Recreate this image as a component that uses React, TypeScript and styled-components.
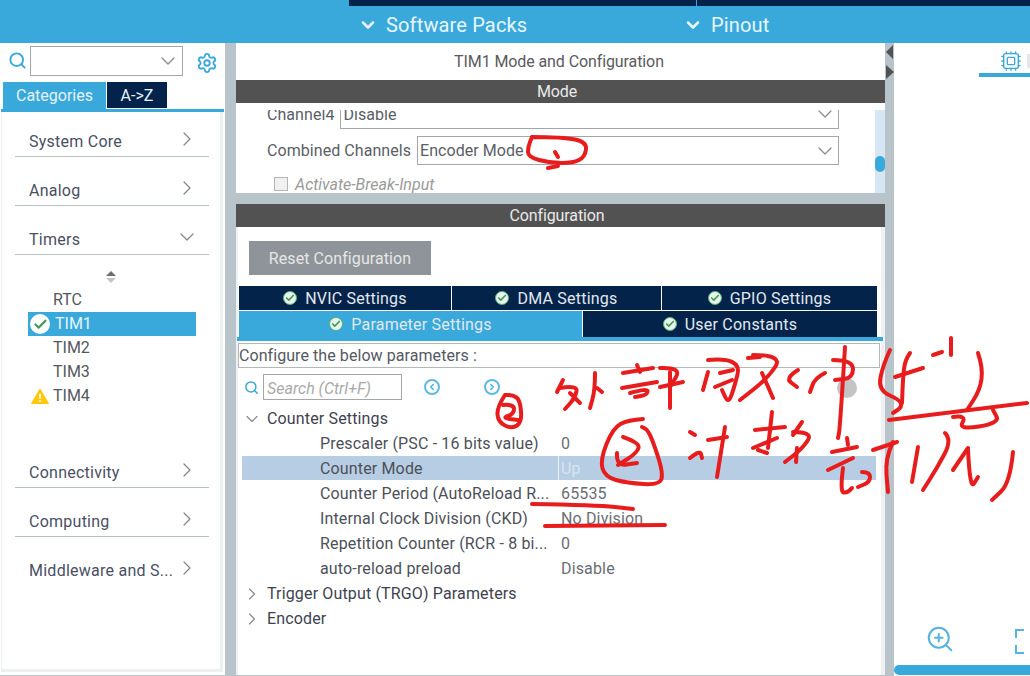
import styled, { createGlobalStyle } from "styled-components";
import { ChevronDown, ChevronRight, Check, Search, Settings, Cpu, ZoomIn, ChevronLeft } from "lucide-react";

const BLUE = "#39a9dc";
const NAVY = "#03234b";
const GUTTER = "#b8c4ca";
const BAR = "#525252";
const INK = "#4a4f63";

const GlobalStyle = createGlobalStyle`
  html, body {
    margin: 0;
    padding: 0;
    width: 1030px;
    height: 676px;
    overflow: hidden;
    background: #fff;
    font-family: Roboto, "Liberation Sans", sans-serif;
  }
`;

const Page = styled.div`
  position: relative;
  width: 1030px;
  height: 676px;
  overflow: hidden;
  display: flex;
  flex-direction: column;
`;

const Header = styled.header`
  height: 43px;
  background: ${BLUE};
  flex: none;
`;

const TopStrip = styled.div`
  height: 7px;
  display: flex;
  padding-left: 349px;
  gap: 1px;
`;

const TopTab = styled.div<{ $w: number }>`
  width: ${(p) => p.$w}px;
  height: 6px;
  background: ${NAVY};
`;

const HeaderMenus = styled.div`
  display: flex;
  height: 36px;
  align-items: center;
  padding-left: 358px;
  color: #e8f6fc;
  font-size: 20px;
`;

const HeaderMenu = styled.div<{ $w: number }>`
  width: ${(p) => p.$w}px;
  display: flex;
  align-items: center;
  gap: 8px;
  letter-spacing: 0.15px;
`;

const Body = styled.div`
  flex: 1;
  display: flex;
  min-height: 0;
  background: ${GUTTER};
`;

const Sidebar = styled.aside`
  width: 225px;
  background: #fff;
  flex: none;
  margin-bottom: 1px;
`;

const SearchRow = styled.div`
  height: 39px;
  display: flex;
  align-items: flex-start;
  padding: 3px 0 0 8px;
  box-sizing: border-box;
  color: ${BLUE};
`;

const Combo = styled.div`
  width: 153px;
  height: 30px;
  margin-left: 3px;
  box-sizing: border-box;
  border: 1px solid #a3a7ab;
  display: flex;
  align-items: center;
  justify-content: flex-end;
  padding-right: 2px;
  color: #8a8a8a;
`;

const GearBox = styled.div`
  margin: 6px 0 0 13px;
  color: ${BLUE};
  display: flex;
`;

const SideTabs = styled.div`
  display: flex;
  height: 27px;
  padding-left: 3px;
  gap: 1px;
`;

const SideTab = styled.div<{ $active?: boolean; $w: number }>`
  width: ${(p) => p.$w}px;
  height: ${(p) => (p.$active ? 27 : 26)}px;
  background: ${(p) => (p.$active ? BLUE : NAVY)};
  color: #e6f2f8;
  font-size: 16px;
  display: flex;
  align-items: center;
  justify-content: center;
`;

const SideRule = styled.div`
  height: 3px;
  width: 223px;
  margin-left: 1px;
  background: ${BLUE};
`;

const SideList = styled.div`
  padding: 0 13px 0 15px;
  width: 222px;
  box-sizing: border-box;
  border-left: 1px solid #edf0f1;
  border-right: 3px solid #edf0f1;
  border-bottom: 3px solid #edf0f1;
  height: 560px;
  margin-left: 1px;
`;

const Category = styled.div<{ $first?: boolean; $last?: boolean }>`
  height: ${(p) => (p.$first ? 45 : 49)}px;
  box-sizing: border-box;
  border-bottom: 1px solid ${(p) => (p.$last ? "transparent" : "#b9c1c8")};
  padding: 0 10px 0 14px;
  margin-left: -2px;
  width: 194px;
  display: flex;
  align-items: flex-end;
  justify-content: space-between;
  color: ${INK};
  font-size: 16px;
  letter-spacing: 0.25px;
  line-height: 28px;
`;

const CategoryIcon = styled.span`
  display: flex;
  color: #808589;
  margin-bottom: 5px;
`;

const ScrollMark = styled.div`
  width: 195px;
  height: 33px;
  display: flex;
  justify-content: center;
  padding-top: 15px;
  margin-left: -4px;
  box-sizing: border-box;
`;

const TimerList = styled.div`
  height: 151px;
`;

const TimerRow = styled.div<{ $selected?: boolean }>`
  position: relative;
  width: 168px;
  height: 24px;
  margin-left: 11px;
  padding-left: ${(p) => (p.$selected ? 27 : 25)}px;
  box-sizing: border-box;
  background: ${(p) => (p.$selected ? BLUE : "transparent")};
  color: ${(p) => (p.$selected ? "#e6f5fb" : "#55585e")};
  font-size: 16px;
  line-height: 23px;
`;

const RowBadge = styled.span`
  position: absolute;
  left: 1px;
  top: 1px;
  width: 22px;
  height: 22px;
  display: flex;
  align-items: center;
  justify-content: center;
`;

const OkBadge = styled.span`
  width: 20px;
  height: 20px;
  border-radius: 50%;
  background: #fff;
  color: #3f9c5b;
  display: flex;
  align-items: center;
  justify-content: center;
`;

const Center = styled.main`
  width: 649px;
  margin-left: 11px;
  flex: none;
  display: flex;
  flex-direction: column;
  min-height: 0;
`;

const TitleBar = styled.div`
  height: 37px;
  background: #fff;
  color: #5a5a5e;
  font-size: 16px;
  letter-spacing: -0.1px;
  display: flex;
  align-items: center;
  justify-content: center;
  padding-right: 3px;
`;

const DarkBar = styled.div`
  height: 23px;
  background: ${BAR};
  color: #e9e9e9;
  font-size: 16px;
  letter-spacing: -0.1px;
  line-height: 23px;
  text-align: center;
  flex: none;
  padding-right: 7px;
`;

const ModePanel = styled.section`
  position: relative;
  height: 90px;
  padding-top: 7px;
  box-sizing: border-box;
  background: #fff;
  flex: none;
  margin-bottom: 11px;
`;

const ModeViewport = styled.div`
  height: 83px;
  overflow: hidden;
`;

const ModeRow = styled.div<{ $top: number; $h: number }>`
  display: flex;
  align-items: center;
  height: ${(p) => p.$h}px;
  margin-top: ${(p) => p.$top}px;
  padding-left: 31px;
  font-size: 16px;
  letter-spacing: 0.06px;
  color: #5a5e66;
`;

const ModeSelect = styled.div<{ $w: number }>`
  width: ${(p) => p.$w}px;
  height: 100%;
  box-sizing: border-box;
  margin-left: 6px;
  border: 1px solid #a3a7ab;
  padding: 0 1px 0 2px;
  display: flex;
  align-items: center;
  justify-content: space-between;
  color: #5a5e66;
  background: #fff;
`;

const CheckRow = styled.div`
  display: flex;
  align-items: center;
  gap: 7px;
  margin-top: 7px;
  padding-left: 38px;
  height: 24px;
  color: #9a9a9a;
  font-size: 16px;
  font-style: italic;
`;

const CheckBox = styled.span`
  width: 14px;
  height: 14px;
  border: 1px solid #b4b4b4;
  background: #f1f1f1;
  box-sizing: border-box;
`;

const ScrollTrack = styled.div`
  position: absolute;
  top: 7px;
  bottom: 0;
  right: 0;
  width: 10px;
  background: #d6e6f5;
`;

const ScrollThumb = styled.div`
  position: absolute;
  top: 46px;
  left: 0;
  width: 10px;
  height: 16px;
  border-radius: 5px;
  background: ${BLUE};
`;

const ConfigPanel = styled.section`
  flex: 1;
  background: #fff;
  border-right: 4px solid #eef0f1;
  box-shadow: inset 2px 0 0 #eef0f1;
  min-height: 0;
  margin-bottom: 1px;
`;

const ResetButton = styled.div`
  width: 182px;
  height: 34px;
  margin: 14px 0 11px 13px;
  background: #8e9499;
  color: #e6e6e6;
  font-size: 16px;
  letter-spacing: 0.08px;
  display: flex;
  align-items: center;
  justify-content: center;
`;

const TabRows = styled.div`
  margin-left: 3px;
  width: 638px;
  display: flex;
  flex-direction: column;
  gap: 1px;
`;

const TabRow = styled.div<{ $cols: string; $h: number }>`
  display: grid;
  grid-template-columns: ${(p) => p.$cols};
  gap: 1px;
  height: ${(p) => p.$h}px;
`;

const ConfigTab = styled.div<{ $active?: boolean }>`
  background: ${(p) => (p.$active ? BLUE : NAVY)};
  color: #e2e8ec;
  font-size: 16px;
  letter-spacing: 0.22px;
  display: flex;
  align-items: center;
  justify-content: center;
  gap: 8px;
`;

const TabCheck = styled.span`
  width: 14px;
  height: 14px;
  border-radius: 50%;
  background: #e9f3ec;
  border: 1px solid #58b076;
  box-sizing: border-box;
  color: #3f9c5b;
  display: flex;
  align-items: center;
  justify-content: center;
`;

const TabRule = styled.div`
  margin-left: 1px;
  width: 646px;
  height: 4px;
  background: ${BLUE};
`;

const HintBox = styled.div`
  margin: 2px 0 0 2px;
  width: 642px;
  height: 25px;
  box-sizing: border-box;
  border: 1px solid #b3b8bb;
  padding-left: 0;
  font-size: 16px;
  line-height: 23px;
  letter-spacing: 0.07px;
  color: #55595f;
`;

const FinderRow = styled.div`
  position: relative;
  display: flex;
  align-items: center;
  height: 26px;
  margin-top: 6px;
  padding-left: 8px;
  color: ${BLUE};
`;

const FinderInput = styled.div`
  width: 139px;
  height: 26px;
  margin-left: 4px;
  box-sizing: border-box;
  border: 1px solid #a3a7ab;
  padding-left: 3px;
  color: #a9a9a9;
  font-size: 16px;
  font-style: italic;
  line-height: 27px;
`;

const RoundNav = styled.span<{ $gap: number }>`
  width: 16px;
  height: 16px;
  margin-left: ${(p) => p.$gap}px;
  border-radius: 50%;
  border: 2px solid #5fb9e2;
  box-sizing: border-box;
  color: ${BLUE};
  display: flex;
  align-items: center;
  justify-content: center;
`;

const GreyDot = styled.span`
  position: absolute;
  left: 601px;
  top: 4px;
  width: 20px;
  height: 20px;
  border-radius: 50%;
  background: #c4c4c4;
`;

const Tree = styled.div`
  margin-top: 6px;
  font-size: 16px;
  letter-spacing: 0.15px;
  color: #4d5058;
`;

const GroupRow = styled.div`
  height: 25px;
  display: flex;
  align-items: center;
  padding-left: 6px;
  color: #3e4250;
`;

const GroupIcon = styled.span`
  width: 25px;
  display: flex;
  color: #85898c;
`;

const ParamRow = styled.div<{ $selected?: boolean }>`
  height: ${(p) => (p.$selected ? 24 : 25)}px;
  margin: 0 0 ${(p) => (p.$selected ? 1 : 0)}px 6px;
  width: 634px;
  display: grid;
  grid-template-columns: 316px 1fr;
  background: ${(p) => (p.$selected ? "#b7cde4" : "transparent")};
  align-items: center;
`;

const ParamName = styled.div`
  padding-left: 78px;
  white-space: nowrap;
`;

const ParamValue = styled.div<{ $selected?: boolean }>`
  height: 100%;
  display: flex;
  align-items: center;
  padding-left: 2px;
  color: ${(p) => (p.$selected ? "#d6e4f0" : "#6a6e74")};
  border-left: 1px solid ${(p) => (p.$selected ? "#e8eff6" : "transparent")};
`;

const MiddleGutter = styled.div`
  width: 9px;
  flex: none;
  display: flex;
  flex-direction: column;
  align-items: center;
`;

const Triangle = styled.span<{ $dir: "left" | "right" }>`
  display: block;
  margin-top: ${(p) => (p.$dir === "left" ? 2 : 6)}px;
  width: 0;
  height: 0;
  border-top: 7px solid transparent;
  border-bottom: 7px solid transparent;
  ${(p) => (p.$dir === "left" ? `border-right: 7px solid ${BAR};` : `border-left: 8px solid ${BAR};`)}
`;

const Preview = styled.aside`
  flex: 1;
  background: #fff;
  display: flex;
  flex-direction: column;
  min-width: 0;
`;

const PreviewTabs = styled.div`
  height: 34px;
  display: flex;
  justify-content: flex-end;
`;

const PreviewTab = styled.div`
  position: relative;
  width: 51px;
  height: 34px;
  box-sizing: border-box;
  border-bottom: 4px solid ${BLUE};
  color: ${BLUE};
  display: flex;
  align-items: center;
  padding: 6px 0 0 21px;
  &::after {
    content: "";
    position: absolute;
    right: 0;
    top: 11px;
    width: 3px;
    height: 14px;
    background: #e4e8ea;
  }
`;

const PreviewCanvas = styled.div`
  flex: 1;
  display: flex;
  align-items: flex-end;
  justify-content: space-between;
  padding: 0 6px 11px 31px;
  color: #58b3de;
`;

const FitBracket = styled.span`
  width: 9px;
  height: 25px;
  box-sizing: border-box;
  border: 2px solid #58b3de;
  border-right: 0;
  margin-bottom: 0;
  position: relative;
  &::after {
    content: "";
    position: absolute;
    left: -2px;
    top: 7px;
    height: 7px;
    width: 4px;
    background: #fff;
  }
`;

const PreviewScroll = styled.div`
  height: 10px;
  margin-bottom: 1px;
  background: ${BLUE};
  border-radius: 5px 0 0 5px;
  flex: none;
`;

const Sketch = styled.svg`
  position: absolute;
  left: 0;
  top: 0;
  width: 1030px;
  height: 676px;
  pointer-events: none;
  fill: none;
  stroke: #e81c1c;
  stroke-width: 4;
  stroke-linecap: round;
  stroke-linejoin: round;
`;

const groupsTop = ["System Core", "Analog", "Timers"];
const groupsBottom = ["Connectivity", "Computing", "Middleware and S..."];
const params = [
  { name: "Prescaler (PSC - 16 bits value)", value: "0" },
  { name: "Counter Mode", value: "Up", selected: true },
  { name: "Counter Period (AutoReload R...", value: "65535" },
  { name: "Internal Clock Division (CKD)", value: "No Division" },
  { name: "Repetition Counter (RCR - 8 bi...", value: "0" },
  { name: "auto-reload preload", value: "Disable" },
];

// red pen notes scribbled over the screenshot, as x,y point lists
const strokes: number[][] = [
  [532, 137, 563, 137, 587, 142, 585, 157, 573, 163, 550, 163, 528, 157, 528, 147, 532, 137],
  [555, 152, 558, 157],
  [548, 168, 558, 166],
  // small circled 2
  [505, 395, 497, 407, 498, 422, 512, 429, 522, 422, 520, 400, 513, 395, 505, 395],
  [503, 405, 514, 404, 514, 414, 502, 418, 518, 420],
  // first line of the note
  [563, 380, 557, 392],
  [560, 388, 578, 385, 575, 398, 565, 409],
  [570, 393, 580, 403],
  [595, 373, 595, 390, 590, 408],
  [597, 388, 602, 392],
  [623, 373, 653, 368],
  [637, 365, 640, 372],
  [622, 388, 657, 382],
  [630, 393, 648, 388, 647, 395, 635, 397],
  [660, 368, 682, 367, 670, 387],
  [670, 372, 670, 408],
  [660, 387, 683, 382],
  [708, 372, 703, 390],
  [708, 360, 742, 357, 733, 392, 728, 403, 722, 390],
  [720, 373, 733, 370],
  [715, 387, 732, 380],
  [748, 358, 760, 357],
  [753, 355, 783, 355, 768, 378, 740, 400],
  [762, 373, 773, 398],
  [798, 370, 785, 378, 797, 387],
  [825, 373, 815, 378, 810, 392],
  [845, 347, 840, 428, 838, 438],
  [833, 360, 853, 360, 853, 378, 835, 380],
  [890, 350, 883, 365, 878, 390, 900, 400, 902, 407, 893, 413],
  [910, 353, 905, 360, 903, 378, 902, 403],
  [895, 377, 923, 368],
  [933, 355, 942, 352],
  [951, 338, 951, 355],
  [978, 353, 983, 368, 980, 390, 967, 410],
  [889, 420, 1027, 403],
  [953, 417, 967, 415, 958, 430, 1000, 423, 993, 410],
  // big circled 2
  [643, 419, 628, 420, 613, 428, 600, 460, 605, 477, 627, 483, 660, 485, 663, 473, 655, 447, 648, 430, 642, 427],
  [623, 437, 640, 443, 637, 453, 618, 465],
  [617, 453, 616, 466, 637, 463],
  // second line of the note
  [690, 432, 695, 435],
  [690, 458, 700, 450, 702, 458],
  [725, 427, 717, 477],
  [708, 440, 727, 437],
  [772, 412, 768, 448],
  [755, 430, 785, 427],
  [753, 448, 777, 438],
  [758, 450, 767, 453],
  [802, 422, 793, 435],
  [793, 432, 813, 432, 803, 448, 785, 462],
  [797, 448, 796, 462],
  [847, 438, 848, 445],
  [832, 452, 857, 447],
  [853, 458, 828, 470],
  [843, 468, 840, 492, 847, 493, 852, 488],
  [862, 472, 870, 472, 870, 482, 858, 487],
  [873, 450, 897, 442],
  [893, 442, 885, 458, 888, 492],
  [918, 447, 912, 482],
  [945, 433, 952, 440, 937, 468, 923, 490],
  [968, 448, 953, 470],
  [968, 450, 970, 490, 978, 477],
  [1013, 452, 1010, 483, 992, 500],
  // underlines
  [532, 504, 597, 505, 633, 509],
  [545, 526, 665, 525],
];

const toPath = (pts: number[]) => {
  let d = `M${pts[0]} ${pts[1]}`;
  for (let i = 2; i < pts.length - 2; i += 2) {
    const mx = (pts[i] + pts[i + 2]) / 2;
    const my = (pts[i + 1] + pts[i + 3]) / 2;
    d += `Q${pts[i]} ${pts[i + 1]} ${mx} ${my}`;
  }
  return `${d}L${pts[pts.length - 2]} ${pts[pts.length - 1]}`;
};

const App = () => {
  return (
    <Page>
      <GlobalStyle />
      <Header>
        <TopStrip>
          <TopTab $w={348} />
          <TopTab $w={333} />
        </TopStrip>
        <HeaderMenus>
          <HeaderMenu $w={325}>
            <ChevronDown size={20} strokeWidth={3} />
            Software Packs
          </HeaderMenu>
          <HeaderMenu $w={200}>
            <ChevronDown size={20} strokeWidth={3} />
            Pinout
          </HeaderMenu>
        </HeaderMenus>
      </Header>
      <Body>
        <Sidebar>
          <SearchRow>
            <Search size={19} strokeWidth={2.4} style={{ marginTop: 5 }} />
            <Combo>
              <ChevronDown size={24} strokeWidth={1.3} />
            </Combo>
            <GearBox>
              <Settings size={22} strokeWidth={2} />
            </GearBox>
          </SearchRow>
          <SideTabs>
            <SideTab $active $w={103}>Categories</SideTab>
            <SideTab $w={60}>A-&gt;Z</SideTab>
          </SideTabs>
          <SideRule />
          <SideList>
            {groupsTop.map((g, i) => (
              <Category key={g} $first={i === 0}>
                {g}
                <CategoryIcon>
                  {g === "Timers" ? <ChevronDown size={24} strokeWidth={1.2} /> : <ChevronRight size={24} strokeWidth={1.2} />}
                </CategoryIcon>
              </Category>
            ))}
            <ScrollMark>
              <svg width="12" height="14" viewBox="0 0 12 14">
                <path d="M6 1l5 5H1z" fill="#6b6f72" />
                <path d="M6 13l5-5H1z" fill="#c3c6c8" />
              </svg>
            </ScrollMark>
            <TimerList>
              <TimerRow>RTC</TimerRow>
              <TimerRow $selected>
                <RowBadge>
                  <OkBadge>
                    <Check size={15} strokeWidth={3.4} />
                  </OkBadge>
                </RowBadge>
                TIM1
              </TimerRow>
              <TimerRow>TIM2</TimerRow>
              <TimerRow>TIM3</TimerRow>
              <TimerRow>
                <RowBadge>
                  <svg width="18" height="16" viewBox="0 0 18 16">
                    <path d="M9 1L17.5 15.5H.5z" fill="#fdc70c" stroke="#fdc70c" strokeLinejoin="round" />
                    <path d="M8 6h2l-.4 5H8.4zM8.1 12.2h1.8V14H8.1z" fill="#fff" />
                  </svg>
                </RowBadge>
                TIM4
              </TimerRow>
            </TimerList>
            {groupsBottom.map((g, i) => (
              <Category key={g} $last={i === 2}>
                {g}
                <CategoryIcon>
                  <ChevronRight size={24} strokeWidth={1.2} />
                </CategoryIcon>
              </Category>
            ))}
          </SideList>
        </Sidebar>
        <Center>
          <TitleBar>TIM1 Mode and Configuration</TitleBar>
          <DarkBar>Mode</DarkBar>
          <ModePanel>
            <ModeViewport>
              <ModeRow $top={-11} $h={30}>
                Channel4
                <ModeSelect $w={499}>
                  Disable
                  <ChevronDown size={24} strokeWidth={1.2} color="#8a8a8a" />
                </ModeSelect>
              </ModeRow>
              <ModeRow $top={7} $h={29}>
                Combined Channels
                <ModeSelect $w={422}>
                  Encoder Mode
                  <ChevronDown size={24} strokeWidth={1.2} color="#8a8a8a" />
                </ModeSelect>
              </ModeRow>
              <CheckRow>
                <CheckBox />
                Activate-Break-Input
              </CheckRow>
            </ModeViewport>
            <ScrollTrack>
              <ScrollThumb />
            </ScrollTrack>
          </ModePanel>
          <DarkBar>Configuration</DarkBar>
          <ConfigPanel>
            <ResetButton>Reset Configuration</ResetButton>
            <TabRows>
              <TabRow $cols="212px 209px 215px" $h={24}>
                {["NVIC Settings", "DMA Settings", "GPIO Settings"].map((t) => (
                  <ConfigTab key={t}>
                    <TabCheck><Check size={10} strokeWidth={4} /></TabCheck>
                    {t}
                  </ConfigTab>
                ))}
              </TabRow>
              <TabRow $cols="343px 294px" $h={26}>
                <ConfigTab $active>
                  <TabCheck><Check size={10} strokeWidth={4} /></TabCheck>
                  Parameter Settings
                </ConfigTab>
                <ConfigTab>
                  <TabCheck><Check size={10} strokeWidth={4} /></TabCheck>
                  User Constants
                </ConfigTab>
              </TabRow>
            </TabRows>
            <TabRule />
            <HintBox>Configure the below parameters :</HintBox>
            <FinderRow>
              <Search size={15} strokeWidth={2.4} />
              <FinderInput>Search (Ctrl+F)</FinderInput>
              <RoundNav $gap={22}><ChevronLeft size={10} strokeWidth={3} /></RoundNav>
              <RoundNav $gap={44}><ChevronRight size={10} strokeWidth={3} /></RoundNav>
              <GreyDot />
            </FinderRow>
            <Tree>
              <GroupRow>
                <GroupIcon><ChevronDown size={20} strokeWidth={1.4} /></GroupIcon>
                Counter Settings
              </GroupRow>
              {params.map((p) => (
                <ParamRow key={p.name} $selected={p.selected}>
                  <ParamName>{p.name}</ParamName>
                  <ParamValue $selected={p.selected}>{p.value}</ParamValue>
                </ParamRow>
              ))}
              <GroupRow>
                <GroupIcon><ChevronRight size={20} strokeWidth={1.4} /></GroupIcon>
                Trigger Output (TRGO) Parameters
              </GroupRow>
              <GroupRow>
                <GroupIcon><ChevronRight size={20} strokeWidth={1.4} /></GroupIcon>
                Encoder
              </GroupRow>
            </Tree>
          </ConfigPanel>
        </Center>
        <MiddleGutter>
          <Triangle $dir="left" />
          <Triangle $dir="right" />
        </MiddleGutter>
        <Preview>
          <PreviewTabs>
            <PreviewTab>
              <Cpu size={22} strokeWidth={1.5} />
            </PreviewTab>
          </PreviewTabs>
          <PreviewCanvas>
            <ZoomIn size={30} strokeWidth={1.6} />
            <FitBracket />
          </PreviewCanvas>
          <PreviewScroll />
        </Preview>
      </Body>
      <Sketch viewBox="0 0 1030 676">
        {strokes.map((pts, i) => (
          <path key={i} d={toPath(pts)} />
        ))}
      </Sketch>
    </Page>
  );
};

export default App;
